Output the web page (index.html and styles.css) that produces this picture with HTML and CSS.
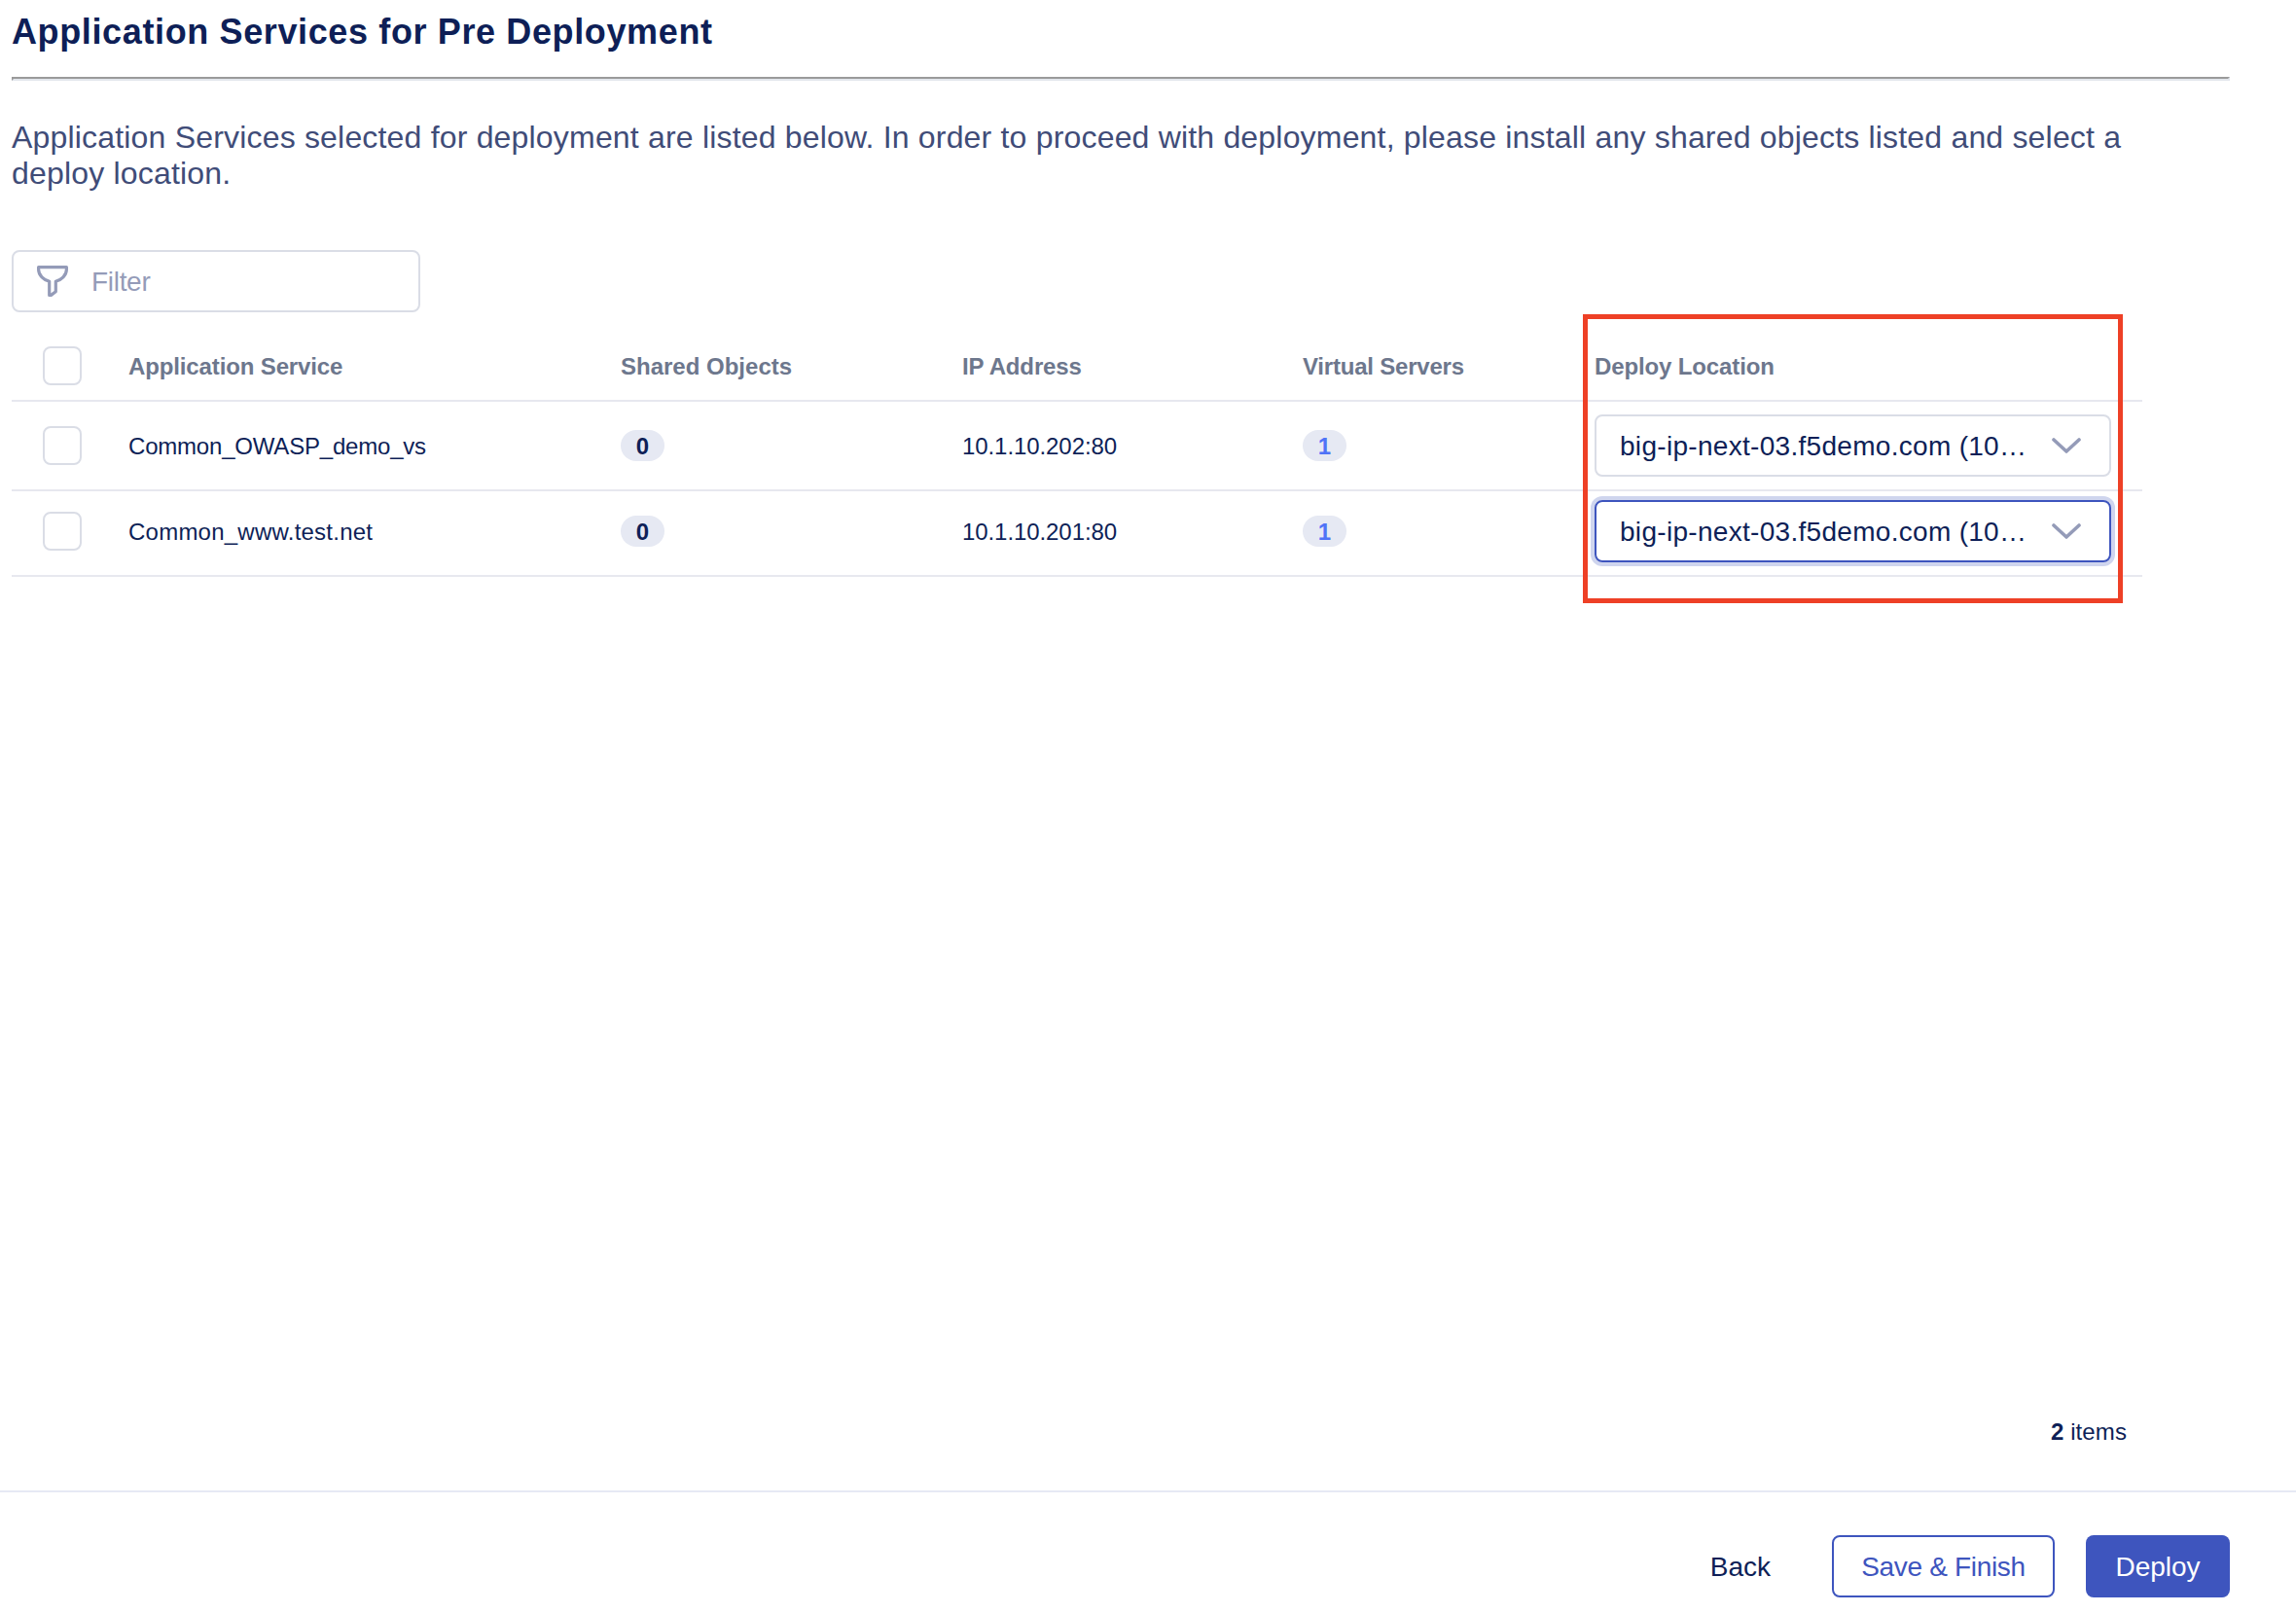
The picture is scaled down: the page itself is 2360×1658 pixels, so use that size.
FILE: index.html
```html
<!DOCTYPE html>
<html lang="en">
<head>
<meta charset="utf-8">
<title>Application Services for Pre Deployment</title>
<link rel="stylesheet" href="styles.css">
</head>
<body>
<main class="content">
  <h1 class="title">Application Services for Pre Deployment</h1>
  <hr class="rule">
  <p class="intro">Application Services selected for deployment are listed below. In order to proceed with deployment, please install any shared objects listed and select a deploy location.</p>
  <div class="filter">
    <svg class="filter-icon" viewBox="0 0 32 32"><path d="M1.600 1.600H30.400V4C30.400 10 25 14.600 19.300 16.300V26.800L14.500 30.400H12.700V16.300C7 14.600 1.600 10 1.600 4Z"/></svg>
    <span class="filter-label">Filter</span>
  </div>
  <section class="table">
    <div class="row head">
      <span class="check"></span>
      <span class="cell">Application Service</span>
      <span class="cell shared">Shared Objects</span>
      <span class="cell">IP Address</span>
      <span class="cell servers">Virtual Servers</span>
      <span class="cell">Deploy Location</span>
    </div>
    <div class="row">
      <span class="check"></span>
      <span class="cell owasp">Common_OWASP_demo_vs</span>
      <span class="badge">0</span>
      <span class="cell ip">10.1.10.202:80</span>
      <span class="badge link">1</span>
      <div class="select"><span class="value">big-ip-next-03.f5demo.com (10…</span><svg class="chevron" viewBox="0 0 30 16"><path d="M2 2L15 14L28 2"/></svg></div>
    </div>
    <div class="row last">
      <span class="check"></span>
      <span class="cell site">Common_www.test.net</span>
      <span class="badge">0</span>
      <span class="cell ip">10.1.10.201:80</span>
      <span class="badge link">1</span>
      <div class="select focused"><span class="value">big-ip-next-03.f5demo.com (10…</span><svg class="chevron" viewBox="0 0 30 16"><path d="M2 2L15 14L28 2"/></svg></div>
    </div>
    <div class="callout"></div>
  </section>
  <div class="count"><b>2</b> items</div>
</main>
<footer class="footer">
  <button class="btn text">Back</button>
  <button class="btn outline">Save &amp; Finish</button>
  <button class="btn primary">Deploy</button>
</footer>
</body>
</html>
```
FILE: styles.css
```css
* { box-sizing: border-box; }
body {
  margin: 0;
  height: 1658px;
  display: flex;
  flex-direction: column;
  background: #fff;
  color: #0e1f57;
  font: 24px/28px "Liberation Sans", Arial, sans-serif;
}
.content { flex: 1; display: flex; flex-direction: column; padding: 0 68px 0 12px; white-space: nowrap; }
.title { margin: 0; padding-top: 12px; height: 79px; font-size: 36px; line-height: 42px; letter-spacing: 0.626px; }
.rule {
  width: 100%;
  height: 4px;
  margin: 0;
  border: 2px solid;
  border-color: #9a9a9a #e2e6ec #e2e6ec #9a9a9a;
}
.intro {
  margin: 40px 0 0;
  width: 2190px;
  height: 134px;
  font-size: 32px;
  line-height: 37px;
  letter-spacing: 0.185px;
  color: #404c78;
  white-space: normal;
}
.filter {
  display: flex;
  align-items: center;
  width: 420px;
  height: 64px;
  padding-left: 24px;
  border: 2px solid #dadde6;
  border-radius: 8px;
  font-size: 28px;
  color: #949bb8;
}
.filter-icon { width: 32px; height: 32px; margin-right: 24px; fill: none; stroke: #949bb8; stroke-width: 3.2; stroke-linejoin: round; }
.filter-label { padding-top: 2px; letter-spacing: -0.3px; }
.table { position: relative; width: 2190px; margin-top: 35px; }
.row {
  display: grid;
  grid-template-columns: 88px 506px 351px 350px 300px 531px;
  align-items: center;
  padding: 13px 0 13px 32px;
  border-bottom: 2px solid #e7e8ef;
}
.head { padding: 0 0 15px 32px; font-weight: bold; color: #6d778d; letter-spacing: -0.13px; }
.last { padding-top: 9px; }
.cell { padding-top: 2px; }
.shared { letter-spacing: 0; }
.servers { letter-spacing: -0.21px; }
.owasp { letter-spacing: -0.2px; }
.site { letter-spacing: 0.235px; }
.ip { letter-spacing: -0.08px; }
.check { width: 40px; height: 40px; border: 2px solid #dadde6; border-radius: 8px; }
.badge { width: 45px; height: 32px; padding-top: 1px; border-radius: 16px; background: #e6e9f3; font-weight: bold; line-height: 32px; text-align: center; }
.link { color: #4f73f7; }
.select {
  display: flex;
  align-items: center;
  justify-content: space-between;
  height: 64px;
  padding: 0 29px 0 24px;
  border: 2px solid #dadde6;
  border-radius: 8px;
  font-size: 28px;
}
.value { padding-top: 2px; letter-spacing: 0.3px; }
.focused { border-color: #3e55be; box-shadow: 0 0 0 4px #cfd5ee; }
.chevron { width: 30px; height: 16px; fill: none; stroke: #949bb8; stroke-width: 3.6; stroke-linecap: round; stroke-linejoin: round; }
.callout { position: absolute; left: 1615px; top: -33px; width: 555px; height: 297px; border: 5px solid #ee4026; }
.count { margin-top: auto; margin-right: 106px; margin-bottom: 46px; text-align: right; letter-spacing: 0.1px; }
.footer { display: flex; justify-content: flex-end; height: 126px; padding: 44px 68px 0 0; border-top: 2px solid #e6e9f4; }
.btn {
  height: 64px;
  padding: 2px 0 0;
  border: 2px solid transparent;
  border-radius: 8px;
  background: none;
  font: 28px "Liberation Sans", Arial, sans-serif;
  color: #0e1f57;
}
.text { margin-right: 61px; }
.outline { width: 229px; margin-right: 32px; border-color: #3e55be; color: #3e55be; letter-spacing: -0.33px; }
.primary { width: 148px; background: #3e55be; color: #fff; }
```
